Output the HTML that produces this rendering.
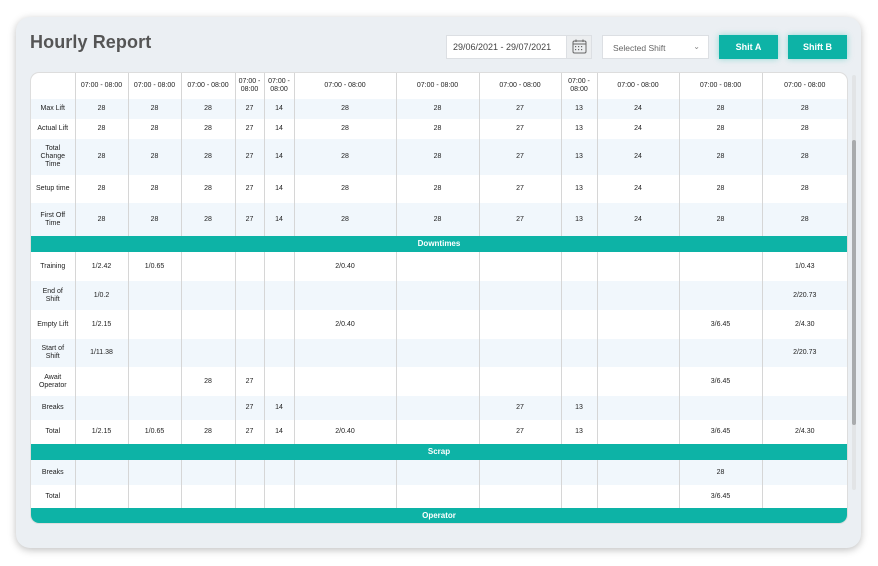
<!DOCTYPE html>
<html><head><style>
*{box-sizing:border-box;margin:0;padding:0}
body{width:878px;height:566px;background:#fff;font-family:"Liberation Sans",sans-serif;position:relative;overflow:hidden}
.card{position:absolute;left:16px;top:17px;width:845px;height:531px;background:#ebeff3;border-radius:14px;box-shadow:0 2px 8px rgba(0,0,0,.25)}
h1{position:absolute;left:30px;top:32px;font-size:18px;font-weight:bold;color:#555;letter-spacing:.1px}
.date{position:absolute;left:446px;top:35px;width:146px;height:24px;background:#fff;border:1px solid #dcdfe3;font-size:9px;color:#444;padding:6px 0 0 6px}
.cal{position:absolute;right:0;top:0;width:25px;height:22px;background:#eceef0;border-left:1px solid #dcdfe3}
.sel{position:absolute;left:602px;top:35px;width:107px;height:24px;background:#fff;border:1px solid #dcdfe3;font-size:8.5px;color:#666;padding:7px 0 0 10px}
.btn{position:absolute;top:35px;width:59px;height:24px;background:#0db3a6;color:#fff;font-size:9px;font-weight:bold;text-align:center;line-height:24px;box-shadow:0 0 6px rgba(13,179,166,.4)}
.wrap{position:absolute;left:31px;top:73px;width:816px;height:450px;border-radius:8px;overflow:hidden;background:#fff;box-shadow:0 0 0 1px #ddd}
table{border-collapse:collapse;table-layout:fixed;width:816px;font-size:7px;color:#222}
td{border-left:1px solid #d6d6d6;text-align:center;padding:0;line-height:8px}
td:first-child{border-left:none}
tr.l td{background:#f1f7fc}
tr.band td{background:#0db3a6;color:#fff;font-weight:bold;font-size:8px;border:none}
.sb{position:absolute;left:852px;top:75px;width:4px;height:415px;background:#e2e4e6;border-radius:2px}
.th{position:absolute;left:852px;top:140px;width:4px;height:285px;background:#a9abad;border-radius:2px}
</style></head><body>
<div class="card"></div>
<h1>Hourly Report</h1>
<div class="date">29/06/2021 - 29/07/2021<div class="cal"><svg width="25" height="22" viewBox="0 0 25 22"><rect x="6" y="5" width="13" height="12" rx="1.5" fill="none" stroke="#666" stroke-width="1"/><line x1="6" y1="8" x2="19" y2="8" stroke="#666"/><line x1="9" y1="3.5" x2="9" y2="6" stroke="#666"/><line x1="16" y1="3.5" x2="16" y2="6" stroke="#666"/><g fill="#666"><rect x="8" y="10" width="1.2" height="1.2"/><rect x="11" y="10" width="1.2" height="1.2"/><rect x="14" y="10" width="1.2" height="1.2"/><rect x="8" y="13" width="1.2" height="1.2"/><rect x="11" y="13" width="1.2" height="1.2"/><rect x="14" y="13" width="1.2" height="1.2"/></g></svg></div></div>
<div class="sel">Selected Shift<span style="position:absolute;right:8px;top:6px;font-size:8px;color:#888">&#8964;</span></div>
<div class="btn" style="left:719px">Shit A</div>
<div class="btn" style="left:788px">Shift B</div>
<div class="wrap"><table>
<colgroup><col style="width:44px"><col style="width:53px"><col style="width:53px"><col style="width:54px"><col style="width:29px"><col style="width:30px"><col style="width:102px"><col style="width:83px"><col style="width:82px"><col style="width:36px"><col style="width:82px"><col style="width:83px"><col style="width:85px"></colgroup>
<tr style="height:26px"><td></td><td>07:00 - 08:00</td><td>07:00 - 08:00</td><td>07:00 - 08:00</td><td>07:00 -<br>08:00</td><td>07:00 -<br>08:00</td><td>07:00 - 08:00</td><td>07:00 - 08:00</td><td>07:00 - 08:00</td><td>07:00 -<br>08:00</td><td>07:00 - 08:00</td><td>07:00 - 08:00</td><td>07:00 - 08:00</td></tr>
<tr class="l" style="height:20px"><td>Max Lift</td><td>28</td><td>28</td><td>28</td><td>27</td><td>14</td><td>28</td><td>28</td><td>27</td><td>13</td><td>24</td><td>28</td><td>28</td></tr>
<tr style="height:20px"><td>Actual Lift</td><td>28</td><td>28</td><td>28</td><td>27</td><td>14</td><td>28</td><td>28</td><td>27</td><td>13</td><td>24</td><td>28</td><td>28</td></tr>
<tr class="l" style="height:36px"><td>Total<br>Change<br>Time</td><td>28</td><td>28</td><td>28</td><td>27</td><td>14</td><td>28</td><td>28</td><td>27</td><td>13</td><td>24</td><td>28</td><td>28</td></tr>
<tr style="height:28px"><td>Setup time</td><td>28</td><td>28</td><td>28</td><td>27</td><td>14</td><td>28</td><td>28</td><td>27</td><td>13</td><td>24</td><td>28</td><td>28</td></tr>
<tr class="l" style="height:33px"><td>First Off<br>Time</td><td>28</td><td>28</td><td>28</td><td>27</td><td>14</td><td>28</td><td>28</td><td>27</td><td>13</td><td>24</td><td>28</td><td>28</td></tr>
<tr class="band" style="height:16px"><td colspan="13">Downtimes</td></tr>
<tr style="height:29px"><td>Training</td><td>1/2.42</td><td>1/0.65</td><td></td><td></td><td></td><td>2/0.40</td><td></td><td></td><td></td><td></td><td></td><td>1/0.43</td></tr>
<tr class="l" style="height:29px"><td>End of<br>Shift</td><td>1/0.2</td><td></td><td></td><td></td><td></td><td></td><td></td><td></td><td></td><td></td><td></td><td>2/20.73</td></tr>
<tr style="height:29px"><td>Empty Lift</td><td>1/2.15</td><td></td><td></td><td></td><td></td><td>2/0.40</td><td></td><td></td><td></td><td></td><td>3/6.45</td><td>2/4.30</td></tr>
<tr class="l" style="height:28px"><td>Start of<br>Shift</td><td>1/11.38</td><td></td><td></td><td></td><td></td><td></td><td></td><td></td><td></td><td></td><td></td><td>2/20.73</td></tr>
<tr style="height:29px"><td>Await<br>Operator</td><td></td><td></td><td>28</td><td>27</td><td></td><td></td><td></td><td></td><td></td><td></td><td>3/6.45</td><td></td></tr>
<tr class="l" style="height:24px"><td>Breaks</td><td></td><td></td><td></td><td>27</td><td>14</td><td></td><td></td><td>27</td><td>13</td><td></td><td></td><td></td></tr>
<tr style="height:24px"><td>Total</td><td>1/2.15</td><td>1/0.65</td><td>28</td><td>27</td><td>14</td><td>2/0.40</td><td></td><td>27</td><td>13</td><td></td><td>3/6.45</td><td>2/4.30</td></tr>
<tr class="band" style="height:16px"><td colspan="13">Scrap</td></tr>
<tr class="l" style="height:25px"><td>Breaks</td><td></td><td></td><td></td><td></td><td></td><td></td><td></td><td></td><td></td><td></td><td>28</td><td></td></tr>
<tr style="height:23px"><td>Total</td><td></td><td></td><td></td><td></td><td></td><td></td><td></td><td></td><td></td><td></td><td>3/6.45</td><td></td></tr>
<tr class="band" style="height:16px"><td colspan="13">Operator</td></tr>
</table></div>
<div class="sb"></div><div class="th"></div>
</body></html>
